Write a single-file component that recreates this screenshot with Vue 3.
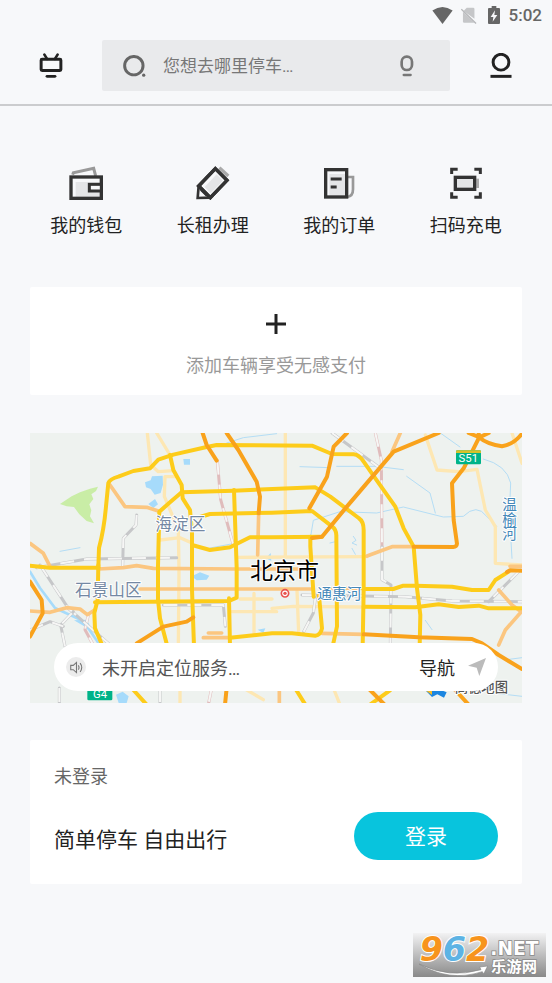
<template>
  <div class="page">
    <div class="status-bar">
      <svg class="status-wifi" viewBox="0 0 62 52" aria-hidden="true">
        <path d="M0 11 Q31 -11 62 11 L31 52 Z" fill="#666" />
      </svg>
      <svg class="status-sim" viewBox="0 0 50 52" aria-hidden="true">
        <path d="M8 12 L18 2 H38 Q42 2 42 6 V36 Z" fill="#c5c6c8" />
        <path d="M6 14 L42 49 H10 Q6 49 6 45 Z" fill="#c5c6c8" />
        <path d="M1 6 L47 51" stroke="#b5b6b8" stroke-width="4" />
      </svg>
      <svg class="status-battery" viewBox="0 0 36 54" aria-hidden="true">
        <path d="M11 0 H25 V6 H33 Q36 6 36 9 V51 Q36 54 33 54 H3 Q0 54 0 51 V9 Q0 6 3 6 H11 Z" fill="#666" />
        <path d="M21 13 L8 33 H16 L14 47 L28 27 H19 Z" fill="#f7f8fa" />
      </svg>
      <span>5:02</span>
    </div>

    <header class="header">
      <button class="icon-btn" aria-label="停车场">
        <svg viewBox="0 0 72 76" class="header-icon" fill="none" stroke="#222" stroke-linecap="round">
          <rect x="6" y="19" width="60" height="34" rx="3" stroke-width="9" />
          <path d="M16 5 L24 18 M56 5 L48 18" stroke-width="8" />
          <path d="M24 71 H48" stroke-width="9" />
        </svg>
      </button>
      <label class="search">
        <svg viewBox="0 0 70 66" class="search-icon" aria-hidden="true">
          <circle cx="33" cy="32" r="28" fill="none" stroke="#666" stroke-width="9" />
          <circle cx="63" cy="61" r="5" fill="#666" />
        </svg>
        <input v-model="keyword" type="text" placeholder="您想去哪里停车…" aria-label="您想去哪里停车" />
        <svg viewBox="0 0 42 66" class="mic-icon" fill="none" stroke="#777" aria-hidden="true">
          <rect x="5" y="5" width="31" height="40" rx="15" stroke-width="8" />
          <path d="M11 60 H32" stroke-width="7" stroke-linecap="round" />
        </svg>
      </label>
      <button class="icon-btn" aria-label="个人中心">
        <svg viewBox="0 0 72 76" class="header-icon" fill="none" stroke="#222">
          <circle cx="36" cy="28" r="24" stroke-width="9" />
          <path d="M4 71 H68" stroke-width="9" />
        </svg>
      </button>
    </header>

    <nav class="menu">
      <button v-for="item in menu" :key="item.id" class="menu-item">
        <svg viewBox="0 0 102 102" class="menu-icon" fill="none" stroke="#333" stroke-width="10" aria-hidden="true">
          <template v-if="item.id === 'wallet'">
            <path d="M11 26 L13 20 L74 7 L80 30" stroke="#999" stroke-width="9" />
            <rect x="20" y="48" width="74" height="46" fill="#e4e5e7" stroke="none" />
            <rect x="6" y="33" width="91" height="64" />
            <rect x="61" y="55" width="36" height="20" fill="#f7f8fa" stroke-width="9" />
          </template>
          <template v-else-if="item.id === 'rent'">
            <path d="M70 5 L97 30" stroke="#aaa" stroke-width="10" />
            <path d="M58 8 L93 43 L43 95 L8 60 Z" fill="#f7f8fa" />
            <path d="M62 25 L81 44 L44 82 L26 63 Z" fill="#e4e5e7" stroke="none" />
            <path d="M58 8 L93 43 L43 95 L8 60 Z" />
            <path d="M8 60 L5 96 L43 95" stroke-width="8" />
            <path d="M14 72 L32 90" stroke-width="5" />
          </template>
          <template v-else-if="item.id === 'order'">
            <path d="M78 33 H93 V70 Q93 91 76 93" stroke="#999" stroke-width="8" />
            <rect x="22" y="24" width="48" height="66" fill="#e4e5e7" stroke="none" />
            <rect x="11" y="11" width="63" height="82" />
            <path d="M26 39 H59 M26 63 H44" stroke-width="9" />
          </template>
          <template v-else>
            <path d="M8 24 V10 H26 M76 10 H94 V24 M8 79 V94 H26 M76 94 H94 V79" stroke-width="9" />
            <rect x="82" y="38" width="8" height="28" fill="#aaa" stroke="none" />
            <rect x="19" y="34" width="58" height="36" fill="#e4e5e7" />
          </template>
        </svg>
        <span>{{ item.label }}</span>
      </button>
    </nav>

    <main class="content">
      <button class="card add-car">
        <svg viewBox="0 0 20 20" class="plus-icon" aria-hidden="true">
          <path d="M10 0 V20 M0 10 H20" stroke="#222" stroke-width="3" />
        </svg>
        <span>添加车辆享受无感支付</span>
      </button>

      <section class="map">
        <svg viewBox="0 0 1476 810" class="map-canvas" role="img" aria-label="北京市地图">
          <rect width="1476" height="810" fill="#eef2ef" />
          <!-- parks and lakes -->
          <path d="M90 213 L125 190 L150 178 L180 167 L204 161 L198 174 L184 184 L190 198 L178 214 L184 232 L180 250 L192 271 L170 264 L148 244 L132 222 L110 220 Z" fill="#c9eda6" />
          <path d="M345 148 L362 142 L366 130 L398 128 L399 155 L392 180 L374 185 L362 168 L348 163 Z M460 78 H480 V95 H462 Z M355 213 L375 198 L384 214 L370 225 Z M485 430 L510 418 L538 428 L530 440 L500 442 Z M258 785 L278 776 L296 790 L290 810 H266 Z M132 562 L170 560 L182 582 L160 578 Z M683 590 L706 586 L700 600 Z M708 376 L722 360 L724 384 Z" fill="#a6dbfb" />
          <path v-for="(d, i) in rivers" :key="'w' + i" :d="d" class="line river" />
          <path d="M0 416 L30 465 L75 525 L150 560 L178 590 L212 640" class="line river-wide" />
          <path d="M970 310 L978 322 L966 330 L980 336 M966 346 L976 364" class="line river" />

          <path v-for="(d, i) in paleRoads" :key="'p' + i" :d="d" class="line pale" />
          <g v-for="(rail, i) in rails" :key="'r' + i">
            <path :d="rail.d" :class="['line', rail.pink ? 'rail-pink' : 'rail']" />
            <path :d="rail.d" class="line rail-gap" />
          </g>
          <path v-for="(d, i) in lightRoads" :key="'l' + i" :d="d" class="line light" />
          <path v-for="(d, i) in yellowRoads" :key="'y' + i" :d="d" class="line yellow" />
          <path v-for="(d, i) in orangeRoads" :key="'o' + i" :d="d" class="line orange" />

          <rect x="1278" y="52" width="75" height="42" rx="4" fill="#00b388" />
          <path d="M1278 60 V56 Q1278 52 1282 52 H1349 Q1353 52 1353 56 V60 Z" fill="#d7c12a" />
          <text x="1315" y="88" class="badge">S51</text>
          <rect x="172" y="758" width="75" height="44" rx="4" fill="#00b388" />
          <text x="210" y="796" class="badge">G4</text>

          <text x="376" y="291" class="district">海淀区</text>
          <text x="135" y="490" class="district">石景山区</text>
          <text x="862" y="497" class="river-name">通惠河</text>
          <text x="1434" y="192" class="river-name vertical">温榆河</text>
          <text x="660" y="437" class="city">北京市</text>
          <circle cx="765" cy="481" r="11" fill="#fff" stroke="#e8534f" stroke-width="5" />
          <circle cx="765" cy="481" r="5" fill="#e8534f" />

          <path d="M1186 772 L1210 762 L1250 778 L1242 794 L1222 784 L1206 792 Z" fill="#1c86e0" />
          <path d="M1186 772 L1206 770 L1206 786 Z" fill="#f6bb24" />
          <text x="1274" y="776" class="map-logo">高德地图</text>
        </svg>

        <div class="location">
          <span class="speaker">
            <svg viewBox="0 0 36 36" aria-hidden="true" fill="none" stroke="#777" stroke-width="3">
              <path d="M2 12 H9 L18 4 V32 L9 24 H2 Z" />
              <path d="M23 12 Q27 18 23 24 M28 6 Q37 18 28 30" />
            </svg>
          </span>
          <span class="location-text">未开启定位服务…</span>
          <button class="nav-btn">
            <span>导航</span>
            <svg viewBox="0 0 54 54" aria-hidden="true">
              <path d="M54 0 L0 23 L26 29 L34 54 Z" fill="#bbb" />
            </svg>
          </button>
        </div>
      </section>

      <section class="card login">
        <p class="login-state">未登录</p>
        <div class="login-row">
          <p class="slogan">简单停车 自由出行</p>
          <button class="login-btn">登录</button>
        </div>
      </section>
    </main>

    <svg class="watermark" viewBox="0 0 399 132" role="img" aria-label="962.NET 乐游网">
      <defs>
        <linearGradient id="mark-bg" x1="0" y1="0" x2="0" y2="1">
          <stop offset="0" stop-color="#f2f2f3" />
          <stop offset="1" stop-color="#898989" />
        </linearGradient>
      </defs>
      <rect width="399" height="132" fill="url(#mark-bg)" />
      <text x="20" y="83" class="mark-number">
        <tspan fill="#f7941d">9</tspan><tspan fill="#5db3e4">6</tspan><tspan fill="#f7941d">2</tspan>
      </text>
      <text x="232" y="66" class="mark-net">.NET</text>
      <path d="M18 93 Q110 138 204 110 L200 102 L224 99 L212 123 L208 116 Q108 148 18 93 Z" fill="#fff" stroke="#888" stroke-width="2" />
      <text x="234" y="118" class="mark-name">乐游网</text>
    </svg>
  </div>
</template>

<script setup>
import { ref } from 'vue';

const keyword = ref('');

const menu = [
  { id: 'wallet', label: '我的钱包' },
  { id: 'rent', label: '长租办理' },
  { id: 'order', label: '我的订单' },
  { id: 'scan', label: '扫码充电' },
];

// Ring roads and main streets
const yellowRoads = [
  'M0 398 L60 404 L205 404',
  'M205 404 L207 345 Q222 290 228 220 L235 150 Q240 138 265 131 L310 114 L360 106 L385 80 L430 65 L530 42 L560 36 L846 38 L906 63 L971 64 Q988 66 1001 86 L1036 136 L1096 221 L1121 286 L1151 341 L1161 466 L1171 546 L1169 640',
  'M420 66 L430 111 L455 156 L458 196 L480 231 L486 300 L486 470 L492 640',
  'M455 178 L610 173 L856 163 L901 191 L986 255 Q1001 265 1001 291 V470 L998 640',
  'M455 178 L420 208 L388 236 L384 400 L384 500 L390 556 L412 640',
  'M510 252 L540 243 L726 239 L846 234 L906 280 Q920 290 919 310 L921 580 L908 640',
  'M612 171 L620 404 L620 494 L597 504 L195 508',
  'M597 496 L600 640',
  'M486 336 L540 351 L600 343 L660 313 L726 313 L876 311',
  'M841 311 L841 341 L851 491 M867 488 L876 586 Q872 606 856 608 L786 601 L726 601 L600 614',
  'M1001 468 L1090 468 L1120 458 L1156 458 L1266 461 L1326 471 L1376 471 L1396 441 L1436 416',
  'M1001 521 L1156 523 L1226 514 L1286 522 L1346 518 L1376 526 L1476 526',
  'M205 396 L203 500 L193 540 L195 586 L218 640',
  'M305 765 L350 815 M795 765 L826 815 M1080 772 L1020 815',
];

// Expressways
const orangeRoads = [
  'M518 0 L530 36 L560 83',
  'M590 0 L625 51 L680 146 L690 191 L686 241',
  'M951 0 L911 41 L891 131 L838 226',
  'M1226 0 L1091 56 L946 226 L876 311 L846 315',
  'M1346 16 L1301 106 L1266 151 L1271 261 L1281 332 Q1280 342 1270 342 L1151 341',
  'M1316 0 L1346 12 Q1372 34 1416 40 Q1452 34 1476 2 M1346 16 V0 M1376 0 L1346 14',
  'M0 446 L35 501 L38 541 L0 611',
  'M320 631 L400 581 L470 566 L490 553',
  'M1001 604 L1166 613 L1326 618 L1356 631 L1406 666 L1476 708',
  'M1431 417 L1440 412 L1476 413',
  'M1014 765 L1064 815 M1270 765 L1316 815 M590 765 L585 815',
];

const lightRoads = [
  'M205 408 L280 404 L320 398 L370 406 L620 408 L846 408',
  'M330 468 H850 M905 466 H1001',
  'M0 534 L60 538 L110 524 L150 528 L172 545 L195 530',
  'M240 156 L285 221 L350 223 L385 234',
  'M0 331 L40 361 L60 400',
  'M1111 0 L1086 56 M686 241 L683 366',
  'M1011 369 L1086 341 L1151 341',
  'M876 601 L1001 604 M520 614 L600 614 M535 600 H575',
  'M1406 471 L1446 516 L1474 536 L1426 591 L1406 636',
  'M1476 400 H1440 M748 765 V815',
];

const paleRoads = [
  'M352 0 L362 95 L385 116 L430 113',
  'M380 0 L420 66',
  'M440 131 H405 L403 190 L445 290 L447 411 L445 640',
  'M390 321 L450 314 L486 330',
  'M766 0 V371 M620 373 L1011 371',
  'M1186 6 L1221 111 L1286 116 L1341 109 L1366 231 L1396 281 V391 L1476 396',
  'M1446 0 L1476 91',
  'M630 498 H726 M605 536 H740 M672 481 V600',
  'M726 526 L790 520 L1001 522 M801 471 L806 600',
  'M910 765 L930 815 M450 765 V815 M640 765 L700 800',
];

const rails = [
  { d: 'M562 83 L572 200 L610 336', pink: true },
  { d: 'M1036 0 L1054 81 L1056 341', pink: true },
  { d: 'M175 546 L165 590 L192 640', pink: true },
  { d: 'M545 765 L535 815', pink: true },
  { d: 'M906 0 L1051 106' },
  { d: 'M1056 341 V440 L1083 456 L1081 640' },
  { d: 'M320 246 L318 276 L280 316 L278 400' },
  { d: 'M20 404 L170 378 L440 374' },
  { d: 'M816 486 L1126 491 L1266 504 L1476 506' },
  { d: 'M856 496 L850 540 L821 596' },
  { d: 'M1471 411 L1376 506' },
  { d: 'M30 396 L115 526 L245 640' },
  { d: 'M105 640 L92 576 L130 536' },
  { d: 'M0 591 L60 566 L100 580' },
  { d: 'M400 516 H580 L586 580 M88 765 V815 M390 765 V815' },
];

const rivers = [
  'M590 30 L640 14 L740 2',
  'M810 101 L900 104 M920 100 L1040 100 L1120 110 M1130 130 L1200 180 L1216 240',
  'M1231 0 L1290 42 M1360 78 Q1430 96 1442 150 L1438 240 L1446 376',
  'M842 310 L850 262 L930 236 L1040 240 L1120 222 L1240 252 L1300 250 Q1340 210 1370 250 L1400 280',
  'M540 345 L620 330 M90 355 L150 344',
  'M1186 562 L1206 590 M1430 680 L1476 674',
  'M1390 780 L1476 790 M900 330 L916 326',
];
</script>

<style>
body {
  background: #f7f8fa;
}
</style>

<style scoped>
.page {
  display: flex;
  flex-direction: column;
  min-height: 100vh;
  background: #f7f8fa;
  color: #222;
  font-family: Roboto, "Noto Sans CJK SC", sans-serif;
  font-size: 18px;
}

button {
  padding: 0;
  border: none;
  background: none;
  color: inherit;
  font: inherit;
  cursor: pointer;
}

p { margin: 0; }
svg { display: block; }

/* Status bar */
.status-bar {
  display: flex;
  align-items: center;
  justify-content: flex-end;
  height: 30px;
  padding-right: 10px;
  color: #666;
  font-size: 17px;
  font-weight: 500;
}
.status-wifi { width: 21px; height: 17px; margin-right: 8px; }
.status-sim { width: 16px; height: 17px; margin-right: 11px; }
.status-battery { width: 12px; height: 18px; margin-right: 9px; }

/* Header */
.header {
  display: grid;
  grid-template-columns: 102px minmax(0, 1fr) 102px;
  padding: 10px 0 13px;
  border-bottom: 2px solid #cbccce;
}
.icon-btn {
  display: flex;
  align-items: center;
  justify-content: center;
}
.header-icon { width: 24px; height: 25px; }
.search {
  display: flex;
  align-items: center;
  height: 51px;
  padding: 0 36px 0 21px;
  border-radius: 2px;
  background: #e9eaec;
}
.search-icon { width: 23px; height: 22px; }
.search input {
  flex: 1;
  min-width: 0;
  margin: 0 17px;
  padding: 0;
  border: none;
  outline: none;
  background: none;
  color: #222;
  font: inherit;
  font-size: 17px;
}
.search input::placeholder { color: #777; opacity: 1; }
.mic-icon { width: 14px; height: 22px; }

/* Shortcuts */
.menu {
  display: grid;
  grid-template-columns: repeat(4, 1fr);
  padding: 60px 23px 0;
}
.menu-item {
  display: flex;
  flex-direction: column;
  align-items: center;
  gap: 13px;
  line-height: 26px;
}
.menu-icon { width: 34px; height: 34px; }

.content {
  display: flex;
  flex-direction: column;
  padding: 48px 30px 0;
}
.card {
  border-radius: 2px;
  background: #fff;
}

.add-car {
  display: flex;
  flex-direction: column;
  align-items: center;
  gap: 19px;
  padding: 27px 0 16px;
  color: #999;
  line-height: 26px;
}
.plus-icon { width: 20px; height: 20px; }

/* Map */
.map {
  position: relative;
  margin: 38px 0 37px;
}
.map-canvas { width: 100%; height: auto; }
.line {
  fill: none;
  stroke-linejoin: round;
  stroke-linecap: round;
}
.river { stroke: #b4ddf5; stroke-width: 3; }
.river-wide { stroke: #a6dbfb; stroke-width: 8; }
.pale { stroke: #fde7b3; stroke-width: 10; }
.light { stroke: #fbc680; stroke-width: 11; }
.yellow { stroke: #fdcc1a; stroke-width: 12; }
.orange { stroke: #f9a21b; stroke-width: 12; }
.rail { stroke: #c6c7c9; stroke-width: 9; }
.rail-pink { stroke: #e0bcbc; stroke-width: 9; }
.rail-gap {
  stroke: #f6f6f5;
  stroke-width: 6;
  stroke-dasharray: 42 30;
  stroke-linecap: butt;
}
.map-canvas text {
  paint-order: stroke;
  stroke: #fff;
  stroke-width: 6px;
  stroke-linejoin: round;
}
.map-canvas .badge {
  fill: #fff;
  stroke: none;
  font-size: 34px;
  text-anchor: middle;
}
.district { fill: #7488a3; font-size: 50px; }
.river-name { fill: #4488b8; font-size: 44px; }
.vertical { writing-mode: vertical-rl; }
.city { fill: #000; font-size: 69px; }
.map-logo { fill: #555; font-size: 40px; font-weight: 500; }

.location {
  position: absolute;
  right: 24px;
  bottom: 12px;
  left: 24px;
  display: flex;
  align-items: center;
  height: 48px;
  padding: 0 12px;
  border-radius: 24px;
  background: #fff;
}
.speaker {
  display: flex;
  align-items: center;
  justify-content: center;
  width: 20px;
  height: 20px;
  border-radius: 50%;
  background: #ececec;
}
.speaker svg { width: 13px; height: 13px; }
.location-text {
  flex: 1;
  margin-left: 16px;
  color: #555;
}
.nav-btn {
  display: flex;
  align-items: center;
  gap: 13px;
}
.nav-btn svg { width: 18px; height: 18px; }

/* Login */
.login { padding: 24px; }
.login-state {
  color: #666;
  line-height: 26px;
}
.login-row {
  display: flex;
  align-items: center;
  justify-content: space-between;
  margin-top: 22px;
  font-size: 21px;
}
.slogan { padding-top: 4px; }
.login-btn {
  width: 144px;
  height: 48px;
  padding-bottom: 2px;
  border-radius: 24px;
  background: #08c4dd;
  color: #fff;
}

.watermark {
  width: 133px;
  height: 44px;
  margin: auto 6px 6px auto;
}
.mark-number {
  font: italic bold 100px "DejaVu Sans", sans-serif;
  paint-order: stroke;
  stroke: #fff;
  stroke-width: 6px;
}
.mark-net,
.mark-name {
  fill: #fff;
  paint-order: stroke;
  stroke: #8a8a8a;
  stroke-width: 5px;
  font-weight: 700;
}
.mark-net { font-family: "DejaVu Sans", sans-serif; font-size: 56px; }
.mark-name { font-size: 46px; }
</style>
